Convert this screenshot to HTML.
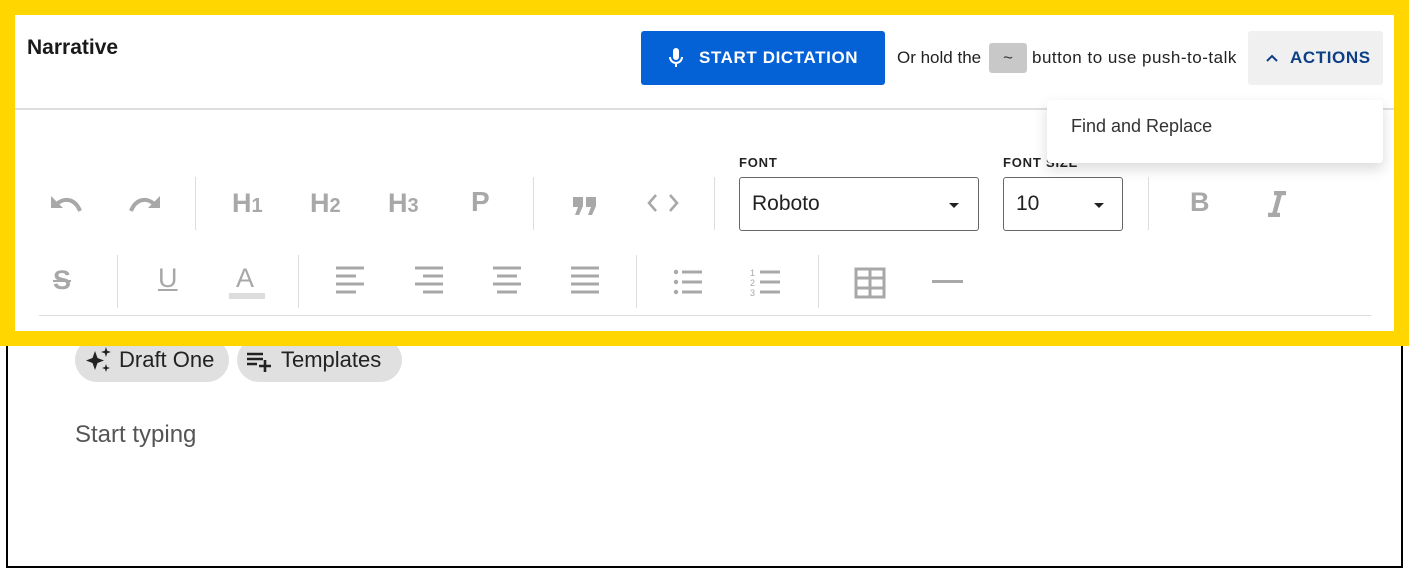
<!DOCTYPE html>
<html><head><style>
*{box-sizing:border-box;margin:0;padding:0}
body{width:1409px;height:568px;background:#fff;position:relative;overflow:hidden;font-family:"Liberation Sans",Arial,sans-serif}
.abs{position:absolute}
.ed{left:6px;top:330px;width:1397px;height:238px;border:2px solid #000;border-top:none}
.chip{background:#e0e0e0;border-radius:22px;height:44px;top:338px;display:flex;align-items:center;font-size:22px;color:#222}
.yel{left:0;top:0;width:1409px;height:346px;background:#ffd600}
.panel{left:15px;top:15px;width:1379px;height:316px;background:#fff}
.ic{color:#a8a8a8;font-weight:bold}
.sep{width:1px;background:#ddd}
</style></head><body>
<div class="abs ed"></div>
<div class="abs chip" style="left:75px;width:154px;padding-left:8px">
<svg width="30" height="30" viewBox="0 0 30 30"><path d="M12 6 L14.5 13 L21 15.5 L14.5 18 L12 25 L9.5 18 L3 15.5 L9.5 13Z M23 2 L24.2 5.8 L28 7 L24.2 8.2 L23 12 L21.8 8.2 L18 7 L21.8 5.8Z M23 19 L24 22 L27 23 L24 24 L23 27 L22 24 L19 23 L22 22Z" fill="#222"/></svg>
<span style="margin-left:6px">Draft One</span></div>
<div class="abs chip" style="left:237px;width:165px;padding-left:8px">
<svg width="28" height="28" viewBox="0 0 28 28"><path d="M2 8h16M2 13h16M2 18h10M20 14v12M14 20h12" stroke="#222" stroke-width="2.6" fill="none"/></svg>
<span style="margin-left:8px">Templates</span></div>
<div class="abs" style="left:75px;top:421px;font-size:24px;color:#555">Start typing</div>

<div class="abs yel"></div>
<div class="abs panel"></div>
<div class="abs" style="left:15px;top:108px;width:1379px;height:2px;background:#ddd"></div>
<div class="abs" style="left:27px;top:36px;font-size:21px;font-weight:bold;color:#1a1a1a">Narrative</div>
<div class="abs" style="left:641px;top:31px;width:244px;height:54px;background:#0461d6;border-radius:3px;color:#fff;font-weight:bold;font-size:17px;letter-spacing:.6px;display:flex;align-items:center;padding-left:27px">
<svg width="16" height="22" viewBox="0 0 16 22"><rect x="5" y="1" width="6" height="12" rx="3" fill="#fff"/><path d="M2 10a6 6 0 0 0 12 0M8 16v4" stroke="#fff" stroke-width="2" fill="none"/></svg>
<span style="margin-left:15px">START DICTATION</span></div>
<div class="abs" style="left:897px;top:48px;font-size:17px;color:#222">Or hold the</div>
<div class="abs" style="left:989px;top:43px;width:38px;height:30px;background:#c8c8c8;border-radius:3px;text-align:center;line-height:30px;font-size:17px;color:#333">~</div>
<div class="abs" style="left:1032px;top:48px;font-size:17px;color:#222;letter-spacing:.5px">button to use push-to-talk</div>
<div class="abs" style="left:1248px;top:31px;width:135px;height:54px;background:#f0f0f0;border-radius:3px;color:#0d3f86;font-weight:bold;font-size:17px;letter-spacing:.6px;display:flex;align-items:center;padding-left:18px">
<svg width="12" height="10" viewBox="0 0 12 10"><path d="M1 8l5-5 5 5" stroke="#0d3f86" stroke-width="2" fill="none"/></svg>
<span style="margin-left:12px">ACTIONS</span></div>

<!-- toolbar row1 -->
<svg class="abs" style="left:50px;top:192px" width="34" height="24" viewBox="0 0 34 24"><path d="M1 4v12h12z" fill="#a8a8a8"/><path d="M6 13c7-8 19-7 24 6" stroke="#a8a8a8" stroke-width="4" fill="none"/></svg>
<svg class="abs" style="left:127px;top:192px" width="34" height="24" viewBox="0 0 34 24"><path d="M33 4v12h-12z" fill="#a8a8a8"/><path d="M28 13c-7-8-19-7-24 6" stroke="#a8a8a8" stroke-width="4" fill="none"/></svg>
<div class="abs sep" style="left:195px;top:177px;height:53px"></div>
<div class="abs ic" style="left:232px;top:188px;font-size:27px">H<span style="font-size:20px">1</span></div>
<div class="abs ic" style="left:310px;top:188px;font-size:27px">H<span style="font-size:20px">2</span></div>
<div class="abs ic" style="left:388px;top:188px;font-size:27px">H<span style="font-size:20px">3</span></div>
<div class="abs ic" style="left:471px;top:186px;font-size:28px">P</div>
<div class="abs sep" style="left:533px;top:177px;height:53px"></div>
<svg class="abs" style="left:572px;top:196px" width="26" height="20" viewBox="0 0 26 20"><path d="M1 1h10v9l-4 9h-4l3-8H1zM14 1h10v9l-4 9h-4l3-8h-5z" fill="#a8a8a8"/></svg>
<div class="abs" style="left:646px;top:192px"><svg width="34" height="22" viewBox="0 0 34 22"><path d="M10 3l-7 8 7 8M24 3l7 8-7 8" stroke="#a8a8a8" stroke-width="2.6" fill="none"/></svg></div>
<div class="abs sep" style="left:714px;top:177px;height:53px"></div>
<div class="abs" style="left:739px;top:155px;font-size:13px;font-weight:bold;letter-spacing:.8px;color:#222">FONT</div>
<div class="abs" style="left:1003px;top:155px;font-size:13px;font-weight:bold;letter-spacing:.8px;color:#222">FONT SIZE</div>
<div class="abs" style="left:1047px;top:100px;width:336px;height:63px;background:#fff;border-radius:4px;box-shadow:0 6px 14px rgba(0,0,0,.15)"></div>
<div class="abs" style="left:1071px;top:116px;font-size:18px;color:#333">Find and Replace</div>
<div class="abs" style="left:739px;top:177px;width:240px;height:54px;border:1.5px solid #666;border-radius:3px;font-size:21px;color:#222;padding:14px 0 0 12px">Roboto<span class="abs" style="left:209px;top:25px;border:5px solid transparent;border-top-color:#222"></span></div>
<div class="abs" style="left:1003px;top:177px;width:120px;height:54px;border:1.5px solid #666;border-radius:3px;font-size:21px;color:#222;padding:14px 0 0 12px">10<span class="abs" style="left:90px;top:25px;border:5px solid transparent;border-top-color:#222"></span></div>
<div class="abs sep" style="left:1148px;top:177px;height:53px"></div>
<div class="abs ic" style="left:1190px;top:187px;font-size:27px">B</div>
<svg class="abs" style="left:1266px;top:191px" width="22" height="26" viewBox="0 0 22 26"><path d="M8 2h12M2 24h12M14 2L8 24" stroke="#a8a8a8" stroke-width="4.5" fill="none"/></svg>

<!-- row2 -->
<div class="abs ic" style="left:53px;top:265px;font-size:27px;text-decoration:line-through">S</div>
<div class="abs sep" style="left:117px;top:255px;height:53px"></div>
<div class="abs ic" style="left:158px;top:263px;font-size:27px;font-weight:normal;text-decoration:underline">U</div>
<div class="abs ic" style="left:236px;top:263px;font-size:27px;font-weight:normal">A</div>
<div class="abs" style="left:229px;top:293px;width:36px;height:6px;background:#ddd"></div>
<div class="abs sep" style="left:298px;top:255px;height:53px"></div>
<svg class="abs" style="left:330px;top:265px" width="280" height="32" viewBox="0 0 280 32" stroke="#a8a8a8" stroke-width="3">
<path d="M6 3h28M6 11h20M6 19h28M6 27h20"/>
<path d="M85 3h28M93 11h20M85 19h28M93 27h20"/>
<path d="M163 3h28M167 11h20M163 19h28M167 27h20"/>
<path d="M241 3h28M241 11h28M241 19h28M241 27h28"/>
</svg>
<div class="abs sep" style="left:636px;top:255px;height:53px"></div>
<svg class="abs" style="left:670px;top:268px" width="36" height="28"><g fill="#a8a8a8"><circle cx="6" cy="4" r="2.2"/><circle cx="6" cy="14" r="2.2"/><circle cx="6" cy="24" r="2.2"/></g><path d="M12 4h20M12 14h20M12 24h20" stroke="#a8a8a8" stroke-width="3"/></svg>
<svg class="abs" style="left:748px;top:268px" width="36" height="30"><g fill="#a8a8a8" font-size="9" font-family="Liberation Sans"><text x="2" y="8">1</text><text x="2" y="18">2</text><text x="2" y="28">3</text></g><path d="M12 4h20M12 14h20M12 24h20" stroke="#a8a8a8" stroke-width="3"/></svg>
<div class="abs sep" style="left:818px;top:255px;height:53px"></div>
<svg class="abs" style="left:854px;top:267px" width="32" height="32"><path d="M2 2h28v28H2zM2 11h28M2 21h28M16 2v28" stroke="#a8a8a8" stroke-width="3" fill="none"/></svg>
<div class="abs" style="left:932px;top:280px;width:31px;height:3px;background:#a8a8a8"></div>
<div class="abs" style="left:39px;top:315px;width:1332px;height:1px;background:#ddd"></div>
</body></html>
